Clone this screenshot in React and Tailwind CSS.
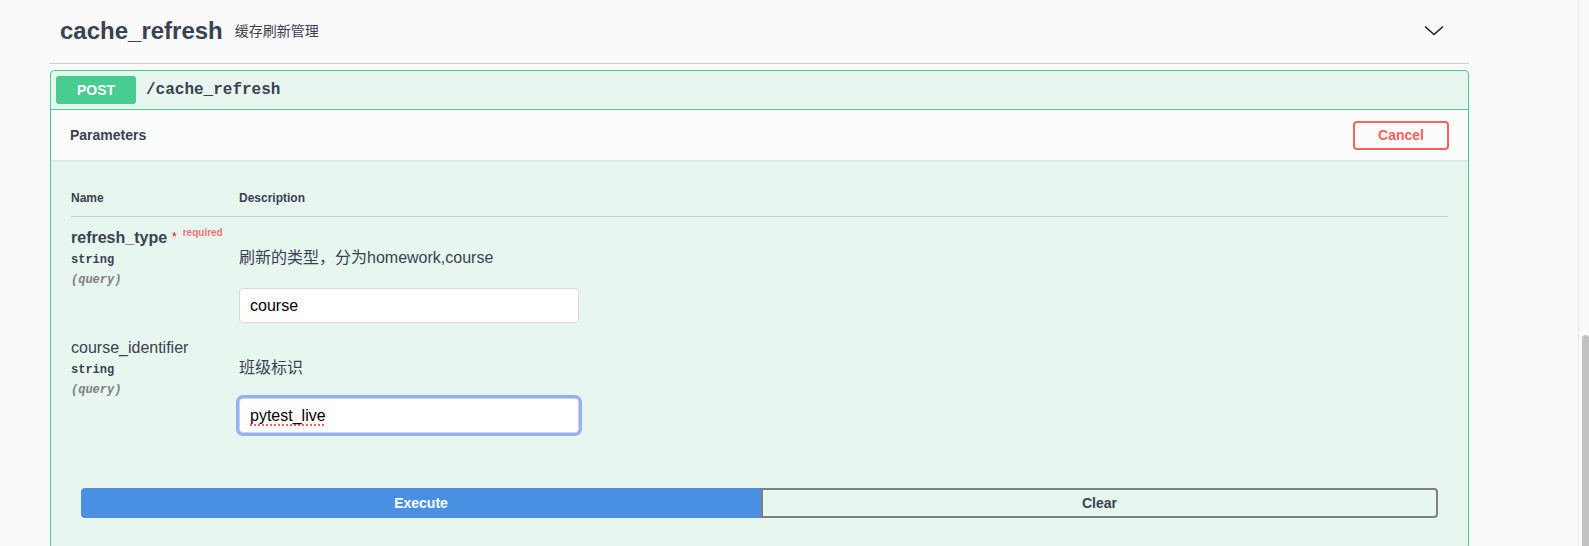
import React from "react";

const sans = "font-['Liberation_Sans','Noto_Sans_CJK_SC',sans-serif]";
const mono = "font-['Liberation_Mono',monospace]";

function Chevron() {
    return (
        <svg width="20" height="12" viewBox="0 0 20 12" fill="none">
            <path d="M1 1.5 L10 9.5 L19 1.5" stroke="#222" strokeWidth="1.6" />
        </svg>
    );
}

function ParamName({ name, required }) {
    return (
        <div className="flex items-start">
            <span className={`text-[16px] leading-[18px] text-[#3b4151] ${required ? "font-bold" : ""}`}>{name}</span>
            {required && (
                <>
                    <span className="ml-[5px] text-[12px] leading-[12px] text-[#ff0000] mt-[2px]">*</span>
                    <span className="ml-[6px] text-[10px] leading-[10px] font-semibold text-[#f47373] mt-[-1px]">required</span>
                </>
            )}
        </div>
    );
}

function ParamRow({ name, required, desc, value, focused }) {
    return (
        <div className="flex">
            {/* name column */}
            <div className={`w-[168px] ${required ? "pt-[12px]" : "pt-[11px]"}`}>
                <ParamName name={name} required={required} />
                <div className={`${mono} mt-[6px] text-[12px] leading-[15px] font-bold text-[#3b4151]`}>string</div>
                <div className={`${mono} mt-[5px] text-[12px] leading-[15px] font-bold italic text-[#808080]`}>(query)</div>
            </div>
            {/* description column */}
            <div className="flex-1 pt-[11px] pb-[5px]">
                <p className={`${required ? "mt-[18px]" : "mt-[17px]"} text-[16px] leading-[24px] text-[#3b4151]`}>{desc}</p>
                {focused ? (
                    <div className="mt-[18px] w-[340px] h-[35px] flex items-center px-[10px] bg-white border border-[#c9d3ee] rounded-[4px] shadow-[0_0_0_3px_#97b0f0]">
                        <span className="text-[16px] text-black underline decoration-dotted decoration-[#ff3b30] underline-offset-[4px]">{value}</span>
                    </div>
                ) : (
                    <div className="mt-[18px] w-[340px] h-[35px] flex items-center px-[10px] bg-white border border-[#d9d9d9] rounded-[4px]">
                        <span className="text-[16px] text-black">{value}</span>
                    </div>
                )}
            </div>
        </div>
    );
}

export default function App() {
    return (
        <div className={`h-[546px] w-full bg-[#fafafa] flex overflow-hidden ${sans}`}>
            {/* Main column */}
            <main className="flex-1 pl-[49px]">
                <section className="w-[1420px]">
                    {/* Tag heading */}
                    <div className="h-[64px] flex items-center pb-[2px] pl-[11px] pr-[25px] border-b border-[#cdcfd3]">
                        <span className="text-[24px] font-bold text-[#3b4151]">cache_refresh</span>
                        <span className="ml-[12px] text-[14px] text-[#3b4151] mt-[2px]">缓存刷新管理</span>
                        <span className="ml-auto">
                            <Chevron />
                        </span>
                    </div>

                    {/* Operation block */}
                    <div className="mt-[6px] ml-[1px] border border-[#49cc90] rounded-[4px] bg-[#e8f6f0]">
                        {/* Summary */}
                        <div className="flex items-center p-[5px] border-b border-[#49cc90]">
                            <span className="w-[80px] h-[28px] flex items-center justify-center rounded-[3px] bg-[#49cc90] text-white text-[14px] font-bold">
                                POST
                            </span>
                            <span className={`${mono} ml-[10px] text-[16px] font-bold text-[#3b4151]`}>/cache_refresh</span>
                        </div>

                        {/* Parameters header */}
                        <div className="h-[50px] px-[19px] flex items-center justify-between bg-white/80 shadow-[0_1px_2px_rgba(0,0,0,0.1)]">
                            <span className="text-[14px] font-bold text-[#3b4151]">Parameters</span>
                            <button className="w-[96px] h-[29px] border-2 border-[#ff6060] rounded-[4px] text-[14px] font-bold text-[#ff6060] bg-transparent">
                                Cancel
                            </button>
                        </div>

                        {/* Parameters table */}
                        <div className="px-[20px] pt-[20px] pb-[20px]">
                            <div className="flex border-b border-[#c4cbc9] pt-[11px] pb-[11px]">
                                <div className="w-[168px] text-[12px] leading-[14px] font-bold text-[#3b4151]">Name</div>
                                <div className="text-[12px] leading-[14px] font-bold text-[#3b4151]">Description</div>
                            </div>
                            <ParamRow name="refresh_type" required desc="刷新的类型，分为homework,course" value="course" />
                            <ParamRow name="course_identifier" desc="班级标识" value="pytest_live" focused />
                        </div>

                        {/* Execute / Clear */}
                        <div className="flex px-[30px] pt-[30px] pb-[30px]">
                            <button className="w-[680px] h-[30px] rounded-l-[4px] bg-[#4990e2] text-white text-[14px] font-bold">
                                Execute
                            </button>
                            <button className="flex-1 h-[30px] rounded-r-[4px] border-2 border-[#808080] bg-transparent text-[#3b4151] text-[14px] font-bold">
                                Clear
                            </button>
                        </div>
                    </div>
                </section>
            </main>

            {/* Scrollbar strip */}
            <div className="w-[11px] border-l border-[#e6e6e6] bg-[#fafafa]">
                <div className="mt-[335px] ml-[3px] w-[7px] h-[300px] rounded-full bg-[#c2c2c2]" />
            </div>
        </div>
    );
}
